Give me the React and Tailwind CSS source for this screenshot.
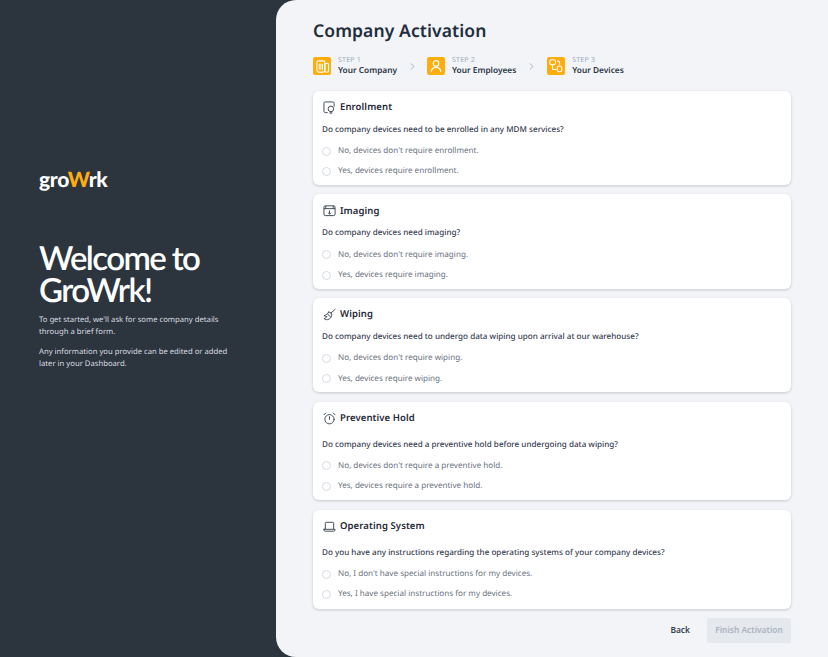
import React from 'react'
import { ChevronRight } from 'lucide-react'

function CompanyIcon() {
  return (
    <svg width="15" height="15" viewBox="0 0 16 16" fill="none" stroke="white" strokeWidth="1.1">
      <rect x="2" y="2" width="8.500" height="12" rx="2" />
      <rect x="10.500" y="4.500" width="4" height="9.500" rx="1.500" />
      <path d="M4.500 5v6.500M6.200 5v6.500M8 5v6.500" />
    </svg>
  )
}

function EmployeeIcon() {
  return (
    <svg width="14" height="14" viewBox="0 0 16 16" fill="none" stroke="white" strokeWidth="1.300" strokeLinecap="round">
      <circle cx="8" cy="5" r="3.200" />
      <path d="M2.500 14.500c.3-3 2.400-5 5.500-5s5.200 2 5.500 5" />
    </svg>
  )
}

function DevicesIcon() {
  return (
    <svg width="16" height="16" viewBox="0 0 18 18" fill="none" stroke="white" strokeWidth="1.200" strokeLinecap="round">
      <rect x="2" y="2" width="6.500" height="5.500" rx="2.200" />
      <rect x="10.500" y="9" width="5" height="6.500" rx="1.800" />
      <path d="M5 8v3.500c0 1 .8 1.500 1.500 1.500H9M10.500 3.500h1c1 0 1.500.7 1.500 1.500v2" />
    </svg>
  )
}

function EnrollIcon() {
  return (
    <svg width="13" height="13" viewBox="0 0 14 14" fill="none" stroke="#374151" strokeWidth="1">
      <path d="M5 12.500H2.500a1.500 1.500 0 0 1-1.500-1.500V2.500A1.500 1.500 0 0 1 2.500 1h8A1.500 1.500 0 0 1 12 2.500V6" />
      <circle cx="8.500" cy="8.500" r="3" />
      <path d="M7 13h3M8.500 11.500V13" />
    </svg>
  )
}

function ImagingIcon() {
  return (
    <svg width="13" height="13" viewBox="0 0 14 14" fill="none" stroke="#374151" strokeWidth="1">
      <rect x="1" y="2" width="12" height="10.500" rx="1.500" />
      <path d="M1 5h12M3 2v3M11 2v3M7 7v3.500M5.500 9.500 7 11l1.500-1.500" />
    </svg>
  )
}

function WipingIcon() {
  return (
    <svg width="13" height="13" viewBox="0 0 14 14" fill="none" stroke="#374151" strokeWidth="1" strokeLinecap="round">
      <path d="M13 1.500 8.500 5.500" />
      <path d="M6 4.500c1.800-.6 3.700 1.300 3.500 3.300-.2 2.200-2.200 4.200-4.500 4.700-1.500.3-3-.2-3.700-1C3 11 4 10 4.200 9 3.200 9.300 2 9 1.300 8.200 3 8 5 6.500 6 4.500Z" />
      <path d="M5 6.500 8 9.500" />
    </svg>
  )
}

function AlarmIcon() {
  return (
    <svg width="13" height="13" viewBox="0 0 14 14" fill="none" stroke="#374151" strokeWidth="1" strokeLinecap="round">
      <circle cx="7" cy="7.800" r="5" />
      <path d="M7 5v3M1 3l2-2M13 3l-2-2" />
    </svg>
  )
}

function LaptopIcon() {
  return (
    <svg width="13" height="13" viewBox="0 0 14 14" fill="none" stroke="#374151" strokeWidth="1" strokeLinecap="round">
      <path d="M2.500 9.500V3.500a1 1 0 0 1 1-1h7a1 1 0 0 1 1 1v6" />
      <path d="M1 10h12v.5a1.500 1.500 0 0 1-1.500 1.500h-9A1.500 1.500 0 0 1 1 10.500V10Z" />
    </svg>
  )
}

function Step({ icon, step, label }) {
  return (
    <div className="flex items-center gap-[7px]">
      <div className="flex h-[18px] w-[18px] items-center justify-center rounded-[2px] bg-[#ffad0d]">{icon}</div>
      <div className="flex flex-col">
        <span className="text-[7px] leading-[10px] tracking-[0.2px] text-[#a0aec0]">{step}</span>
        <span className="text-[8.300px] leading-[10px] font-semibold text-[#2d3748]">{label}</span>
      </div>
    </div>
  )
}

function Option({ text }) {
  return (
    <div className="flex h-[20.500px] items-center gap-[7px]">
      <span className="h-[9px] w-[9px] rounded-full border border-[#d5dbe3] bg-white"></span>
      <span className="text-[8.100px] text-[#6b7280]">{text}</span>
    </div>
  )
}

function Card({ icon, title, question, options, tall }) {
  return (
    <div className={`rounded-[6px] bg-white px-[9px] shadow-[0_1px_3px_rgba(0,0,0,0.18)] ${tall ? 'h-[98.900px]' : 'h-[94.300px]'}`}>
      <div className="flex h-[32px] items-center gap-[4px] pl-[1px] pt-[1px]">
        {icon}
        <span className="text-[9.500px] tracking-[0.1px] font-semibold text-[#1f2937]">{title}</span>
      </div>
      <div className={`text-[8.100px] leading-[12px] font-medium text-[#374151] ${tall ? 'mt-[5px]' : 'mt-[1px]'}`}>{question}</div>
      <div className="mt-[5px] flex flex-col">
        {options.map((o) => (
          <Option key={o} text={o} />
        ))}
      </div>
    </div>
  )
}

export default function App() {
  return (
    <div className="flex h-[657px] w-[828px] overflow-hidden bg-[#2c343e] font-['Noto_Sans',sans-serif] [text-rendering:geometricPrecision]">
      <div className="flex w-[276px] shrink-0 flex-col pl-[39px] pt-[168px] text-white">
        <div className="font-['Lato',sans-serif] text-[21px] leading-[24px] font-black tracking-[-0.3px]">
          gro<span className="text-[#ffad0d]">W</span>rk
        </div>
        <h1 className="mt-[50px] font-['Lato',sans-serif] text-[33px] leading-[32px] font-semibold tracking-[-1.600px]">
          Welcome to<br />GroWrk!
        </h1>
        <p className="mt-[9px] text-[7.700px] leading-[11.500px] text-[#d8dce1]">
          To get started, we'll ask for some company details<br />through a brief form.
        </p>
        <p className="mt-[9px] text-[7.700px] leading-[11.500px] text-[#d8dce1]">
          Any information you provide can be edited or added<br />later in your Dashboard.
        </p>
      </div>

      <div className="flex flex-1 flex-col rounded-l-[20px] bg-[#f2f4f7] pl-[37px] pr-[37px]">
        <h2 className="mt-[19px] text-[17.500px] leading-[24px] tracking-[0.1px] font-semibold text-[#1f2d3d]">Company Activation</h2>
        <div className="mt-[14px] flex h-[18px] items-center">
          <Step icon={<CompanyIcon />} step="STEP 1" label="Your Company" />
          <ChevronRight className="ml-[10px] mr-[9px] text-[#a0aec0]" size={11} />
          <Step icon={<EmployeeIcon />} step="STEP 2" label="Your Employees" />
          <ChevronRight className="ml-[10px] mr-[10px] text-[#a0aec0]" size={11} />
          <Step icon={<DevicesIcon />} step="STEP 3" label="Your Devices" />
        </div>

        <div className="mt-[15.800px] flex flex-col gap-[9.300px]">
          <Card
            icon={<EnrollIcon />}
            title="Enrollment"
            question="Do company devices need to be enrolled in any MDM services?"
            options={["No, devices don't require enrollment.", 'Yes, devices require enrollment.']}
          />
          <Card
            icon={<ImagingIcon />}
            title="Imaging"
            question="Do company devices need imaging?"
            options={["No, devices don't require imaging.", 'Yes, devices require imaging.']}
          />
          <Card
            icon={<WipingIcon />}
            title="Wiping"
            question="Do company devices need to undergo data wiping upon arrival at our warehouse?"
            options={["No, devices don't require wiping.", 'Yes, devices require wiping.']}
          />
          <Card
            tall
            icon={<AlarmIcon />}
            title="Preventive Hold"
            question="Do company devices need a preventive hold before undergoing data wiping?"
            options={["No, devices don't require a preventive hold.", 'Yes, devices require a preventive hold.']}
          />
          <Card
            tall
            icon={<LaptopIcon />}
            title="Operating System"
            question="Do you have any instructions regarding the operating systems of your company devices?"
            options={["No, I don't have special instructions for my devices.", 'Yes, I have special instructions for my devices.']}
          />
        </div>

        <div className="mt-[9.500px] flex items-center justify-end">
          <button className="mr-[17px] text-[8.400px] font-semibold text-[#374151]">Back</button>
          <button className="h-[25px] w-[84px] rounded-[2px] bg-[#e5e8ec] text-[8.400px] font-semibold text-[#a9b4c2]">Finish Activation</button>
        </div>
      </div>
    </div>
  )
}
